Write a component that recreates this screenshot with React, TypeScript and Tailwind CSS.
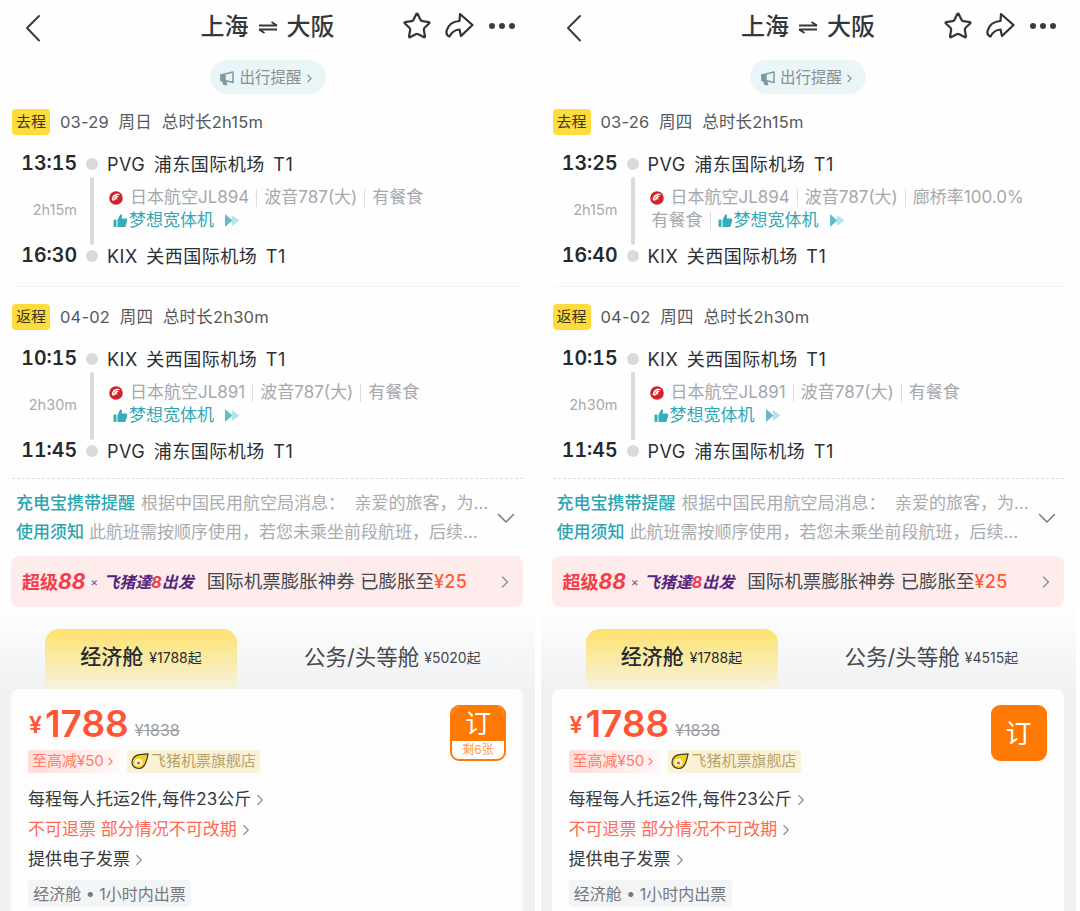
import React from "react";
import { ChevronRight, Star } from "lucide-react";

const JalLogo = () => (
  <svg width="14" height="14" viewBox="0 0 14 14" className="shrink-0">
    <circle cx="7" cy="7" r="6.800" fill="#d3232a" />
    <path d="M2.800 8.500C3 5 5.500 2.600 8.500 2.700c1.300 0 2.400.6 2.900 1.500-1.700-.5-3.200-.2-4.200.8 1.100-.3 2.300 0 3 .7-1.300 0-2.500.6-3 1.700.9-.1 1.600.3 2 1-1.900-.3-3.200.2-4.200 1.300-1.100.2-2.300-.6-2.200-1.200z" fill="#fff" />
    <path d="M4.700 8.300c.3-1.700 1.300-3 2.600-3.700" stroke="#d3232a" strokeWidth="0.700" fill="none" />
  </svg>
);

const Thumb = () => (
  <svg width="15" height="15" viewBox="0 0 15 15" className="shrink-0">
    <rect x="0.500" y="6.500" width="3" height="7.500" rx="1" fill="#35aebb" />
    <path d="M4.500 7 7.200 1.500c1.300-.4 2.100.6 1.800 1.900L8.600 5.500h4.200c1 0 1.700.9 1.400 1.900l-1.400 5.300c-.2.800-.8 1.300-1.600 1.300H4.500z" fill="#35aebb" />
  </svg>
);

const DoubleArrow = () => (
  <svg width="16" height="15" viewBox="0 0 16 15" className="shrink-0">
    <path d="M1 1 8.500 7.500 1 14z" fill="#5cc0cb" />
    <path d="M8 2 15.500 7.500 8 13z" fill="#b5e3e8" />
  </svg>
);

const Megaphone = () => (
  <svg width="16" height="16" viewBox="0 0 16 16" className="shrink-0" fill="none" stroke="#7d9aa3" strokeWidth="1.500" strokeLinejoin="round">
    <path d="M14 2v10.500L6 10.500H2V5z" />
    <path d="M3.500 10.500 5 14.500h2.500L6.500 10.500" fill="#7d9aa3" />
    <path d="M2 5h4v5.500H2z" fill="#7d9aa3" />
  </svg>
);

const Share = () => (
  <svg width="30" height="28" viewBox="0 0 30 28" fill="none" stroke="#2e3136" strokeWidth="2.200" strokeLinejoin="round" strokeLinecap="round">
    <path d="M16 2 28.500 13 17 24l-1.500-6.500c-4.500.3-7.500 2-10 7-2.500-.8-3.500-3.200-2.800-6C4.200 13 9 9.500 15.500 9z" />
  </svg>
);

const Back = () => (
  <svg width="16" height="28" viewBox="0 0 16 28" fill="none" stroke="#3a3d42" strokeWidth="2" strokeLinecap="round" strokeLinejoin="round">
    <path d="M14 2 2 14l12 12.500" />
  </svg>
);

const Down = () => (
  <svg width="18" height="11" viewBox="0 0 18 11" fill="none" stroke="#75787d" strokeWidth="1.500" strokeLinecap="round" strokeLinejoin="round">
    <path d="M1.500 1.500 9 9l7.500-7.500" />
  </svg>
);

const FliggyLogo = () => (
  <svg width="18" height="17" viewBox="0 0 18 17" className="shrink-0">
    <path d="M1 9.500C1 5 4.500 2 8.500 1.700L17 1c-.5 3.500-1.200 6.500-2.700 9.500-1.300 3-3.600 5-6.300 5C3.800 15.500 1 13 1 9.500z" fill="#f4d21c" stroke="#3b372c" strokeWidth="1.200" />
    <ellipse cx="7.500" cy="9.500" rx="4" ry="3.800" fill="#fbf6e5" />
    <circle cx="7.500" cy="10" r="1.500" fill="#e2453d" />
  </svg>
);

const Sep = () => <span className="mx-[7px] inline-block h-[18px] w-px bg-[#dcdde0]" />;

type Leg = {
  label: string;
  date: string;
  total: string;
  dep: string;
  depPort: string;
  arr: string;
  arrPort: string;
  dur: string;
  flight: string;
  bridge?: boolean;
};

function Wide() {
  return (
    <span className="flex items-center gap-[1px] text-[17px] text-[#30a9b6]">
      <Thumb />
      <span>梦想宽体机</span>
      <span className="ml-[9px]">
        <DoubleArrow />
      </span>
    </span>
  );
}

function FlightLeg({ leg }: { leg: Leg }) {
  return (
    <section className="flex flex-col">
      <div className="flex h-[26px] items-center gap-[10px]">
        <span className="flex h-[26px] w-[38px] items-center justify-center rounded-[4px] bg-[#ffdc3d] text-[15px] text-[#3a3320]">{leg.label}</span>
        <span className="whitespace-pre text-[16.500px] tracking-[0.2px] text-[#55585d]">
          {leg.date}
          {"  "}
          {leg.total}
        </span>
      </div>
      <div className="mt-[15px] grid grid-cols-[66px_29px_1fr] grid-rows-[28px_64px_28px]">
        <div className="flex items-center justify-end pr-[1px] text-[19.500px] font-semibold tabular-nums text-[#25282d]">{leg.dep}</div>
        <div className="flex items-center justify-center pr-[1px]">
          <span className="h-[12px] w-[12px] rounded-full bg-[#d9dadd]" />
        </div>
        <div className="flex items-center whitespace-pre text-[18px] tracking-[0.5px] text-[#2c2f34] [word-spacing:3px]">{leg.depPort}</div>

        <div className="flex items-center justify-end pr-[1px] text-[14.500px] text-[#a8aaae]">{leg.dur}</div>
        <div className="flex items-stretch justify-center pr-[1px]">
          <span className="-mb-[3px] -mt-[1px] w-[4px] rounded-full bg-[#d9dadd]" />
        </div>
        <div className="-mt-[2px] flex flex-col justify-center text-[17px] leading-[23px] text-[#a6a8ad]">
          <div className="flex h-[23px] items-center whitespace-nowrap">
            <span className="ml-[2px] mr-[7px]"><JalLogo /></span>
            <span>{leg.flight}</span>
            <Sep />
            <span>波音787(大)</span>
            <Sep />
            <span>{leg.bridge ? "廊桥率100.0%" : "有餐食"}</span>
          </div>
          <div className="flex h-[23px] items-center pl-[6px]">
            {leg.bridge && (
              <>
                <span className="ml-[-2px]">有餐食</span>
                <Sep />
              </>
            )}
            <Wide />
          </div>
        </div>

        <div className="flex items-center justify-end pr-[1px] text-[19.500px] font-semibold tabular-nums text-[#25282d]">{leg.arr}</div>
        <div className="flex items-center justify-center pr-[1px]">
          <span className="h-[12px] w-[12px] rounded-full bg-[#d9dadd]" />
        </div>
        <div className="flex items-center whitespace-pre text-[18px] tracking-[0.5px] text-[#2c2f34] [word-spacing:3px]">{leg.arrPort}</div>
      </div>
    </section>
  );
}

type PanelData = {
  outbound: Leg;
  inbound: Leg;
  businessPrice: string;
  left?: string;
};

function Panel({ data }: { data: PanelData }) {
  return (
    <div className="flex h-[911px] w-[535px] shrink-0 flex-col overflow-hidden bg-[#fefefe]">
      <header className="relative flex h-[54px] items-center justify-center">
        <span className="absolute left-[25px] top-[14px]"><Back /></span>
        <h1 className="flex items-center gap-[9px] text-[24px] font-medium text-[#34373c]">
          <span>上海</span>
          <svg width="20" height="13" viewBox="0 0 20 13" fill="none" stroke="#34373c" strokeWidth="1.800">
            <path d="M1 4.500h18M19 4.500 13.500 1" />
            <path d="M19 8.500H1M1 8.500 6.500 12" />
          </svg>
          <span>大阪</span>
        </h1>
        <div className="absolute right-[20px] top-[11px] flex items-center gap-[12px]">
          <Star size={30} strokeWidth={1.800} color="#33363b" />
          <Share />
          <span className="ml-[3px] flex items-center gap-[4px]">
            <span className="h-[6px] w-[6px] rounded-full bg-[#3a3d42]" />
            <span className="h-[6px] w-[6px] rounded-full bg-[#3a3d42]" />
            <span className="h-[6px] w-[6px] rounded-full bg-[#3a3d42]" />
          </span>
        </div>
      </header>

      <div className="mt-[6px] flex justify-center">
        <div className="flex h-[34px] w-[116px] items-center justify-center gap-[4px] rounded-full bg-[#e9f5f6] pt-[2px] text-[15.500px] text-[#8a9094]">
          <Megaphone />
          <span>出行提醒</span>
          <ChevronRight size={13} strokeWidth={2} className="ml-[-3px]" />
        </div>
      </div>

      <div className="mt-[15px] pl-[12px] pr-[12px]">
        <FlightLeg leg={data.outbound} />
        <div className="mb-[17px] mt-[16px] h-px bg-[#f3f3f4]" />
        <FlightLeg leg={data.inbound} />
        <div className="mt-[13px] border-t border-dashed border-[#dedfe1]" />
        <div className="relative mt-[10px] pl-[4px] pr-[32px] text-[17px]">
          <div className="flex h-[29px] items-center whitespace-nowrap">
            <span className="mr-[6px] font-medium text-[#2ba5b1]">充电宝携带提醒</span>
            <span className="text-[#a9abb0]">根据中国民用航空局消息：&nbsp;&nbsp;亲爱的旅客，为…</span>
          </div>
          <div className="flex h-[29px] items-center whitespace-nowrap">
            <span className="mr-[5px] font-medium text-[#2ba5b1]">使用须知</span>
            <span className="text-[#a9abb0]">此航班需按顺序使用，若您未乘坐前段航班，后续…</span>
          </div>
          <span className="absolute right-[8px] top-[24px]"><Down /></span>
        </div>
        <div className="-ml-[1px] mt-[9px] flex h-[51px] items-center rounded-[8px] bg-[#fdeceb] pl-[11px] pr-[8px]">
          <span className="text-[18px] font-bold text-[#f53d4a]">超级<i className="text-[21px]">88</i></span>
          <span className="mx-[5px] text-[12px] text-[#6c6468]">×</span>
          <span className="text-[16px] font-bold italic text-[#55247e]">飞猪達<span className="text-[#f0384e]">8</span>出发</span>
          <span className="ml-[13px] text-[18.500px] text-[#45484d]">国际机票膨胀神券&nbsp;已膨胀至</span>
          <span className="text-[18px] font-medium tracking-[0.4px] text-[#ff5a32]">¥25</span>
          <ChevronRight className="ml-auto" size={20} strokeWidth={1.500} color="#8a8c90" />
        </div>
      </div>

      <div className="flex flex-1 flex-col bg-[linear-gradient(#fefefe_0px,#f0f1f3_85px)] pl-[11px] pr-[12px] pt-[22px]">
        <div className="flex h-[60px] pl-[34px]">
          <div className="flex h-[60px] w-[192px] items-center justify-center gap-[6px] rounded-t-[14px] bg-[linear-gradient(#fde26c,#f6f2df)] pb-[4px] text-[#26292d]">
            <span className="text-[21px] font-medium">经济舱</span>
            <span className="text-[14px]">¥1788起</span>
          </div>
          <div className="flex h-[60px] items-center gap-[5px] pb-[4px] pl-[67px] text-[#45484d]">
            <span className="whitespace-nowrap text-[21.500px]">公务/头等舱</span>
            <span className="whitespace-nowrap text-[14px]">{`¥${data.businessPrice}起`}</span>
          </div>
        </div>
        <div className="relative flex-1 rounded-t-[8px] bg-[#fdfdfd] pl-[17px] pt-[14px]">
          <div className="flex h-[42px] items-end">
            <span className="mb-[3px] ml-[1px] text-[23px] font-semibold text-[#ff5537]">¥</span>
            <span className="ml-[3px] text-[37px] font-semibold leading-[42px] text-[#ff5537]">1788</span>
            <span className="mb-[3px] ml-[6px] text-[16px] text-[#9a9ca0] line-through">¥1838</span>
          </div>
          <div className="mt-[5px] flex h-[23px] items-center gap-[8px]">
            <span className="flex h-[23px] w-[91px] shrink-0 items-center whitespace-nowrap rounded-[3px] bg-[linear-gradient(90deg,#ffdcd8,#fff8f7)] pl-[4px] text-[15px] text-[#ff7c6c]">至高减¥50<ChevronRight className="shrink-0" size={13} strokeWidth={2} /></span>
            <span className="flex h-[23px] w-[133px] items-center justify-center gap-[2px] rounded-[3px] bg-[#faf1d6] text-[15px] text-[#b9a266]">
              <FliggyLogo />
              飞猪机票旗舰店
            </span>
          </div>
          <div className="mt-[12px] flex h-[30px] items-center text-[17px] text-[#37393e]">每程每人托运2件,每件23公斤<ChevronRight size={18} strokeWidth={1.500} color="#8a8c90" /></div>
          <div className="flex h-[30px] items-center text-[17px] text-[#ff6a55]">不可退票&nbsp;部分情况不可改期<ChevronRight size={18} strokeWidth={1.500} color="#8a8c90" /></div>
          <div className="flex h-[30px] items-center text-[17px] text-[#37393e]">提供电子发票<ChevronRight size={18} strokeWidth={1.500} color="#8a8c90" /></div>
          <div className="mt-[5px] inline-flex h-[27px] w-[163px] items-center justify-center rounded-[4px] bg-[#f3f4f6] text-[16px] text-[#75787d]">经济舱 • 1小时内出票</div>

          {data.left ? (
            <div className="absolute right-[17px] top-[16px] flex h-[56px] w-[56px] flex-col overflow-hidden rounded-[9px] border-2 border-[#ff7a05] bg-white">
              <div className="flex h-[34px] items-center justify-center bg-[#ff7a05] text-[26px] leading-none text-white">订</div>
              <div className="flex flex-1 items-center justify-center text-[12px] text-[#ff9a4a]">{data.left}</div>
            </div>
          ) : (
            <div className="absolute right-[17px] top-[16px] flex h-[56px] w-[56px] items-center justify-center rounded-[9px] bg-[#ff7a05] text-[26px] text-white">订</div>
          )}
        </div>
      </div>
    </div>
  );
}

const back: Leg = {
  label: "返程",
  date: "04-02  周四",
  total: "总时长2h30m",
  dep: "10:15",
  depPort: "KIX 关西国际机场 T1",
  arr: "11:45",
  arrPort: "PVG 浦东国际机场 T1",
  dur: "2h30m",
  flight: "日本航空JL891",
};

const panels: PanelData[] = [
  {
    outbound: {
      label: "去程",
      date: "03-29  周日",
      total: "总时长2h15m",
      dep: "13:15",
      depPort: "PVG 浦东国际机场 T1",
      arr: "16:30",
      arrPort: "KIX 关西国际机场 T1",
      dur: "2h15m",
      flight: "日本航空JL894",
    },
    inbound: back,
    businessPrice: "5020",
    left: "剩6张",
  },
  {
    outbound: {
      label: "去程",
      date: "03-26  周四",
      total: "总时长2h15m",
      dep: "13:25",
      depPort: "PVG 浦东国际机场 T1",
      arr: "16:40",
      arrPort: "KIX 关西国际机场 T1",
      dur: "2h15m",
      flight: "日本航空JL894",
      bridge: true,
    },
    inbound: back,
    businessPrice: "4515",
  },
];

export default function App() {
  return (
    <div
      className="flex h-[911px] w-[1080px] gap-[5.500px] overflow-hidden bg-white"
      style={{ fontFamily: 'Inter, "Noto Sans CJK SC", sans-serif' }}
    >
      {panels.map((p, i) => (
        <Panel key={i} data={p} />
      ))}
    </div>
  );
}
